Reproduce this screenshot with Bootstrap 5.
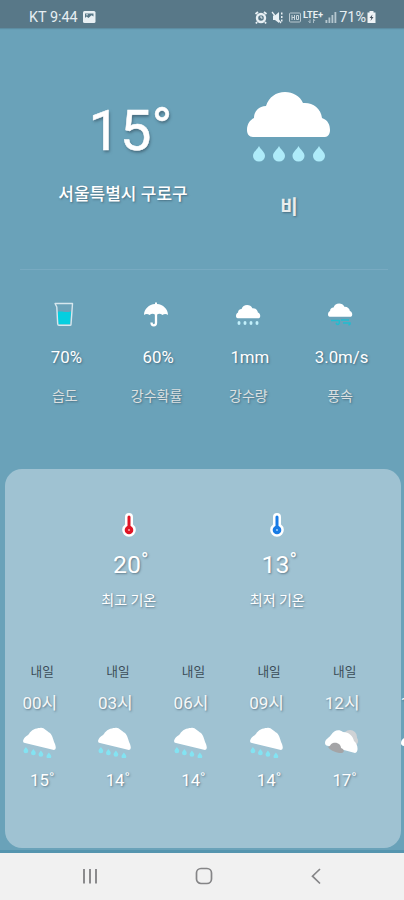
<!DOCTYPE html>
<html lang="ko">
<head>
<meta charset="utf-8">
<meta name="viewport" content="width=device-width, initial-scale=1">
<title>날씨</title>
<link href="https://cdn.jsdelivr.net/npm/bootstrap@5.3.0/dist/css/bootstrap.min.css" rel="stylesheet">
<style>
body{font-family:Roboto,"Noto Sans CJK KR",sans-serif;background:#6aa2b9;width:404px;height:900px;color:#fff}
svg{display:block;flex:none}
.line{line-height:20px;height:20px;white-space:nowrap;text-shadow:1px 1px 2px rgba(40,60,75,.5)}
.statusbar{height:28px;background:#587888;color:#e6eef2;font-size:14.4px;padding:7px 27px 0 29px;line-height:22px;box-shadow:0 1px 1px rgba(80,120,140,.5)}
.now{height:241px;padding:62px 32px 0 40px}
.now-temp{font-size:56px;line-height:60px;height:60px;margin:11px 0 23px 15px;text-shadow:1px 2px 3px rgba(40,60,75,.55);-webkit-text-stroke:.5px #fff}
.now-temp span{display:inline-block;transform:translateY(-3px)}
.place{font-size:17px;font-weight:500}
.sky{font-size:19px;font-weight:700;color:#e9eded;margin-top:32px}
.rule{height:1px;margin:0 16px 0 20px;background:#78aac1}
.stats{padding:31px 17px 0 20px;height:199px}
.stats svg{margin-left:-3px}
.stat-num{font-size:16.8px;margin:20px 0 0 1px}
.stat-name{font-size:14px;color:#dbe0e1;margin:19px 0 0 -2px}
.panel{margin:0 3.5px 0 4.5px;height:379px;border-radius:17px;background:#9fc2d2;padding-top:43px}
.extremes{padding:0 49px 0 50px;height:150px}
.deg-num{font-size:24.8px;line-height:26px;height:26px;margin:14px 0 12px 4px}
.deg-num span{display:inline-block;font-size:20px;transform:translateY(-6px)}
.ext-name{font-size:14px}
.hour{flex:0 0 75.6px;width:75.6px}
.day{font-size:12.7px;color:#3b4c57;text-shadow:none}
.clock{font-size:17px;margin:11px 0 13px -5px;color:#f6f8f8}
.hour svg{margin-left:-6px}
.hour-temp{font-size:16.8px;margin-top:12px}
.edge{height:3px;background:#5595af;margin-top:2px}
.navkeys{height:49px;background:#f1f1f1;padding:0 77px 3px 80px}
</style>
<script src="https://cdn.jsdelivr.net/npm/bootstrap@5.3.0/dist/js/bootstrap.bundle.min.js"></script>
</head>
<body class="overflow-hidden">
<svg width="0" height="0" class="position-absolute">
<defs>
<path id="cloud" d="M6 45C2 45 0 42 0 38C0 32 3 28 7 26C7 19 12 14 19 14C22 5 29 0 38 0C46 0 53 4 56 11C65 10 74 16 75 26C81 28 83 33 83 38C83 42 81 45 78 45Z"/>
<path id="drop" d="M6 0C8 4 12 6 12 10A6 5.5 0 0 1 0 10C0 6 4 4 6 0Z"/>
<g id="rain"><use href="#cloud" fill="#fff"/><g fill="#aeebf9"><use href="#drop" x="6" y="54"/><use href="#drop" x="26" y="54"/><use href="#drop" x="45.500" y="54"/><use href="#drop" x="66" y="54"/></g></g>
<g id="tiltrain"><path d="M0 13C1 9 4 8 6 6C8 2 13 0 17 0C21-1 23 3 27 5C30 8 30 12 32 16Q34 22 31 22L2 15Q0 15 0 13Z" fill="#fff"/><g fill="#83e3f2"><use href="#drop" transform="translate(.5 19) scale(.4)"/><use href="#drop" transform="translate(8 21) scale(.4)"/><use href="#drop" transform="translate(15.500 22.500) scale(.4)"/><use href="#drop" transform="translate(23.500 24.500) scale(.4)"/></g></g>
<g id="cloudy"><circle cx="25" cy="9" r="7" fill="#cfd2d5"/><circle cx="29" cy="13" r="4" fill="#cfd2d5"/><path d="M0 15C0 11 4 10 6 7C9 2 14 1 18 4C24 4 28 8 29 13C33 16 34 24 30 25L4 18Q0 18 0 15Z" fill="#fff"/><path d="M3 19C5 19 5 16 8 15C13 14 16 17 16 20C19 21 20 24 17 25C12 25 6 23 3 19Z" fill="#a4a4a6"/></g>
</defs>
</svg>

<header class="statusbar d-flex align-items-start">
<span>KT 9:44</span>
<svg class="ms-1" style="margin-top:4px" width="14" height="13" viewBox="0 0 14 13"><rect x="1" y="0" width="12.500" height="12" rx="1.500" fill="#e8f0f4"/><path d="M3 2.500H11.500V5.500L9.500 4.200L6.500 7L4.500 5.500L3 7Z" fill="#587888"/><circle cx="5" cy="3.700" r=".8" fill="#e8f0f4"/></svg>
<div class="d-flex ms-auto">
<svg style="margin-top:3px" width="86" height="15" viewBox="0 0 86 15" fill="none" stroke="#e8f0f4">
<circle cx="8" cy="8" r="4" stroke-width="2.400"/><path d="M8 5.800V8H9.500" stroke-width="1"/><path d="M2.500 4L5 2M11 2L13.500 4M4 12L3 13.500M12 12L13 13.500" stroke-width="1.800"/>
<path d="M20 5.500H22L26 2V13L22 10H20Z" fill="#e8f0f4" stroke="none"/><path d="M19 2L28 13" stroke-width="1.200"/><path d="M28 3.500H29.500M28 7H29.500M28 10.500H29.500" stroke-width="2"/>
<rect x="36.500" y="3" width="11" height="9" rx="1" stroke="#b8c8d0"/><path d="M39 5V10M41.500 5V10M39 7.500H41.500M43.500 5.500H45.500V9.500H43.500Z" stroke="#cbd7dd"/>
<text x="50" y="8" font-family="Roboto, sans-serif" font-size="8.500" font-weight="700" fill="#e8f0f4" stroke="none" textLength="20" lengthAdjust="spacingAndGlyphs">LTE+</text>
<path d="M57 13V9.500M55.500 11L57 13M60.500 13V9M60.500 9L62 11" stroke="#a9bcc6"/>
<g fill="#b5c7cf" stroke="none"><rect x="72.500" y="10" width="1.800" height="3"/><rect x="75.500" y="7.500" width="1.800" height="5.500"/><rect x="78.500" y="5" width="1.800" height="8"/><rect x="81.500" y="2" width="1.800" height="11"/></g>
</svg>
<span>71%</span>
<svg style="margin-top:4px" width="11" height="13" viewBox="0 0 11 13"><path d="M3.500 0H7.500V1.500H9.500V12H1.500V1.500H3.500Z" fill="#eef3f6"/><path d="M6.500 3.500L3.500 7H5.300L4.500 10L7.500 6H5.800Z" fill="#46535f"/></svg>
</div>
</header>

<section class="now d-flex">
<div class="w-50 d-flex flex-column align-items-center">
<div class="now-temp">15<span>°</span></div>
<div class="line place">서울특별시 구로구</div>
</div>
<div class="w-50 d-flex flex-column align-items-center">
<svg class="mt-1" width="84" height="72" viewBox="0 2 84 72" overflow="visible"><use href="#rain"/></svg>
<div class="line sky">비</div>
</div>
</section>
<div class="rule"></div>

<section class="stats d-flex text-center">
<div class="w-25 d-flex flex-column align-items-center">
<svg width="26" height="26" viewBox="0 0 26 26"><path d="M6.500 11C10 9.500 14 12 20 10.500L19 23.500H7.500Z" fill="#05cfe0"/><path d="M4 2.500H21.500L20 23.500Q20 24.300 19 24.300H8Q6.800 24.300 6.700 23L5.800 6Z" fill="none" stroke="#d7e7ee" stroke-width="1.400" stroke-linejoin="round"/></svg>
<div class="line stat-num">70%</div><div class="line stat-name">습도</div>
</div>
<div class="w-25 d-flex flex-column align-items-center">
<svg width="26" height="26" viewBox="0 0 26 26"><path d="M1 14C1 8 6 3.500 12 3V1.500H14V3C20 3.500 25 8 25 14C23.500 12.500 21 12.500 19.500 14C17.500 12.500 15.500 12.500 14.200 13.500H11.800C10.500 12.500 8.500 12.500 6.500 14C5 12.500 2.500 12.500 1 14Z" fill="#fff"/><path d="M13 12V22Q13 24.300 10.800 24.300Q8.500 24.300 8.500 21.500" fill="none" stroke="#fff" stroke-width="2.300"/></svg>
<div class="line stat-num">60%</div><div class="line stat-name">강수확률</div>
</div>
<div class="w-25 d-flex flex-column align-items-center">
<svg width="26" height="26" viewBox="0 0 26 26"><g transform="translate(1 4) scale(.292)"><use href="#cloud" fill="#fff"/></g><g fill="#c2f0fb"><ellipse cx="4" cy="22" rx="1.500" ry="2"/><ellipse cx="10" cy="22" rx="1.500" ry="2"/><ellipse cx="16" cy="22" rx="1.500" ry="2"/><ellipse cx="22" cy="22" rx="1.500" ry="2"/></g></svg>
<div class="line stat-num">1mm</div><div class="line stat-name">강수량</div>
</div>
<div class="w-25 d-flex flex-column align-items-center">
<svg width="26" height="26" viewBox="0 0 26 26"><g transform="translate(1 2.500) scale(.292)"><use href="#cloud" fill="#fff"/></g><path d="M4 19.500H12Q13 20 12 22M14 19H22M9 22Q11 25 12.500 22M16 22H23Q23.500 23.500 21.500 24" fill="none" stroke="#20bdd0" stroke-width="1.500"/></svg>
<div class="line stat-num">3.0m/s</div><div class="line stat-name">풍속</div>
</div>
</section>

<main class="panel">
<div class="extremes d-flex">
<div class="w-50 d-flex flex-column align-items-center">
<svg width="16" height="26" viewBox="0 0 16 26"><path d="M4 5A4 4 0 0 1 12 5V12.500A6.800 6.800 0 1 1 4 12.500Z" fill="#fff"/><path d="M8 5V16" stroke="#e01525" stroke-width="3" stroke-linecap="round"/><circle cx="8" cy="18" r="4.300" fill="#e01525"/><circle cx="8" cy="18" r="1.100" fill="#f6a0a5"/></svg>
<div class="line deg-num">20<span>°</span></div><div class="line ext-name">최고 기온</div>
</div>
<div class="w-50 d-flex flex-column align-items-center">
<svg width="16" height="26" viewBox="0 0 16 26"><path d="M4 5A4 4 0 0 1 12 5V12.500A6.800 6.800 0 1 1 4 12.500Z" fill="#fff"/><path d="M8 5V16" stroke="#187be5" stroke-width="3" stroke-linecap="round"/><circle cx="8" cy="18" r="4.300" fill="#187be5"/><circle cx="8" cy="18" r="1.100" fill="#9ccbfa"/></svg>
<div class="line deg-num">13<span>°</span></div><div class="line ext-name">최저 기온</div>
</div>
</div>
<div class="d-flex">
<div class="hour d-flex flex-column align-items-center"><div class="line day">내일</div><div class="line clock">00시</div><svg width="33" height="32" viewBox="0 0 33 32"><use href="#tiltrain" y="2"/></svg><div class="line hour-temp">15˚</div></div>
<div class="hour d-flex flex-column align-items-center"><div class="line day">내일</div><div class="line clock">03시</div><svg width="33" height="32" viewBox="0 0 33 32"><use href="#tiltrain" y="2"/></svg><div class="line hour-temp">14˚</div></div>
<div class="hour d-flex flex-column align-items-center"><div class="line day">내일</div><div class="line clock">06시</div><svg width="33" height="32" viewBox="0 0 33 32"><use href="#tiltrain" y="2"/></svg><div class="line hour-temp">14˚</div></div>
<div class="hour d-flex flex-column align-items-center"><div class="line day">내일</div><div class="line clock">09시</div><svg width="33" height="32" viewBox="0 0 33 32"><use href="#tiltrain" y="2"/></svg><div class="line hour-temp">14˚</div></div>
<div class="hour d-flex flex-column align-items-center"><div class="line day">내일</div><div class="line clock">12시</div><svg width="33" height="32" viewBox="0 0 33 32"><use href="#cloudy" y="2"/></svg><div class="line hour-temp">17˚</div></div>
<div class="hour d-flex flex-column align-items-center"><div class="line day"></div><div class="line clock">15시</div><svg width="33" height="32" viewBox="0 0 33 32"><use href="#cloudy" y="2"/></svg></div>
</div>
</main>
<div class="edge"></div>
<footer class="navkeys d-flex justify-content-between align-items-center">
<svg width="20" height="18" viewBox="0 0 20 18" stroke="#8b8b8d" stroke-width="2"><path d="M4 2V16.500M10 2V16.500M16 2V16.500"/></svg>
<svg width="20" height="18" viewBox="0 0 20 18"><rect x="2.500" y="1.500" width="15" height="15" rx="4.500" fill="none" stroke="#858587" stroke-width="1.700"/></svg>
<svg width="20" height="18" viewBox="0 0 20 18"><path d="M13 2L5.500 9.200L13 16.500" fill="none" stroke="#858587" stroke-width="1.700"/></svg>
</footer>
</body>
</html>
